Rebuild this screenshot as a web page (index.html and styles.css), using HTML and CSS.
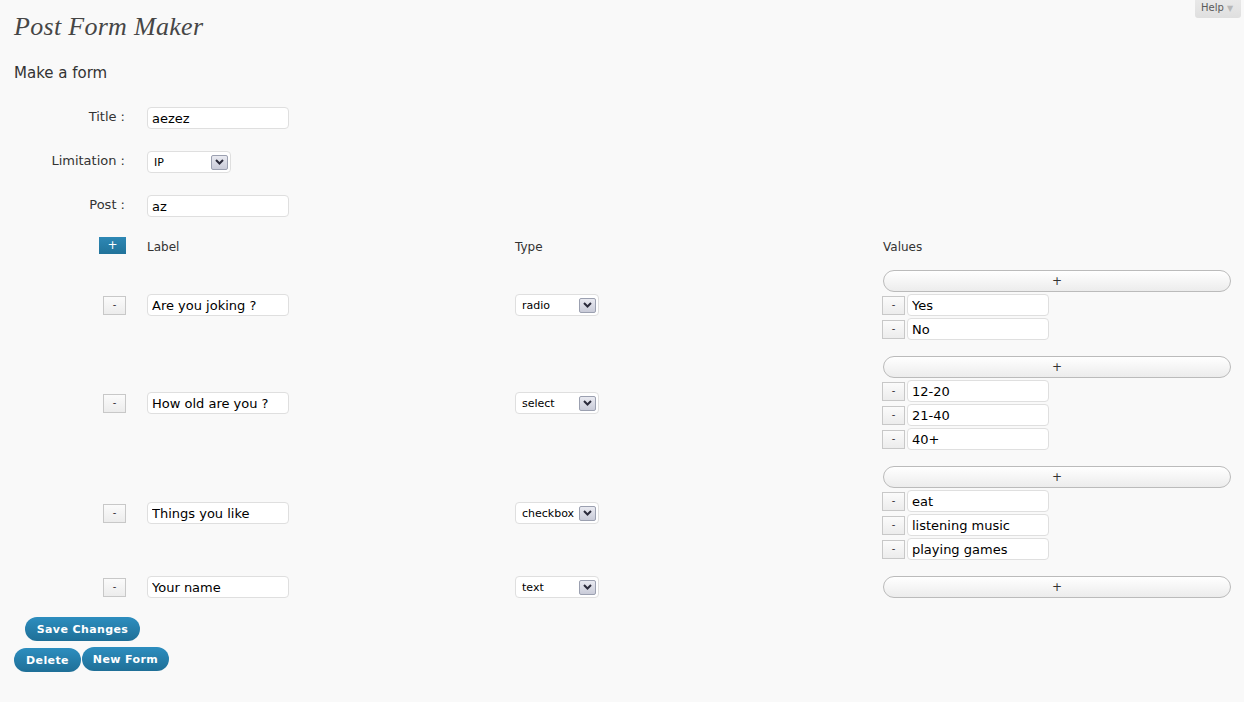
FILE: index.html
```html
<!DOCTYPE html>
<html>
<head>
<meta charset="utf-8">
<title>Post Form Maker</title>
<link rel="stylesheet" href="styles.css">
</head>
<body>
<div class="help-tab">Help <span class="help-arrow">▼</span></div>
<div class="wrap">
  <h2 class="page-title">Post Form Maker</h2>
  <h3 class="section-title">Make a form</h3>

  <div class="settings">
    <label class="field-label">Title :</label>
    <div class="field"><input class="text-input" type="text" value="aezez"></div>

    <label class="field-label">Limitation :</label>
    <div class="field">
      <div class="select small-select"><span class="select-value">IP</span><span class="select-arrow"><svg width="9" height="6" viewBox="0 0 9 6"><path d="M1 1 L4.5 4.5 L8 1" fill="none" stroke="#2b2b3b" stroke-width="2"/></svg></span></div>
    </div>

    <label class="field-label">Post :</label>
    <div class="field"><input class="text-input" type="text" value="az"></div>
  </div>

  <div class="fields">
    <div class="fields-row head">
      <div class="cell-btn"><button class="add-btn">+</button></div>
      <div class="col-head">Label</div>
      <div class="col-head">Type</div>
      <div class="col-head">Values</div>
    </div>

    <div class="fields-row">
      <div class="cell-btn"><button class="mini-btn">-</button></div>
      <div><input class="text-input" type="text" value="Are you joking ?"></div>
      <div><div class="select type-select"><span class="select-value">radio</span><span class="select-arrow"><svg width="9" height="6" viewBox="0 0 9 6"><path d="M1 1 L4.5 4.5 L8 1" fill="none" stroke="#2b2b3b" stroke-width="2"/></svg></span></div></div>
      <div class="values">
        <button class="pill-btn">+</button>
        <div class="value-row"><button class="mini-btn">-</button><input class="text-input value-input" type="text" value="Yes"></div>
        <div class="value-row"><button class="mini-btn">-</button><input class="text-input value-input" type="text" value="No"></div>
      </div>
    </div>

    <div class="fields-row">
      <div class="cell-btn"><button class="mini-btn">-</button></div>
      <div><input class="text-input" type="text" value="How old are you ?"></div>
      <div><div class="select type-select"><span class="select-value">select</span><span class="select-arrow"><svg width="9" height="6" viewBox="0 0 9 6"><path d="M1 1 L4.5 4.5 L8 1" fill="none" stroke="#2b2b3b" stroke-width="2"/></svg></span></div></div>
      <div class="values">
        <button class="pill-btn">+</button>
        <div class="value-row"><button class="mini-btn">-</button><input class="text-input value-input" type="text" value="12-20"></div>
        <div class="value-row"><button class="mini-btn">-</button><input class="text-input value-input" type="text" value="21-40"></div>
        <div class="value-row"><button class="mini-btn">-</button><input class="text-input value-input" type="text" value="40+"></div>
      </div>
    </div>

    <div class="fields-row">
      <div class="cell-btn"><button class="mini-btn">-</button></div>
      <div><input class="text-input" type="text" value="Things you like"></div>
      <div><div class="select type-select"><span class="select-value">checkbox</span><span class="select-arrow"><svg width="9" height="6" viewBox="0 0 9 6"><path d="M1 1 L4.5 4.5 L8 1" fill="none" stroke="#2b2b3b" stroke-width="2"/></svg></span></div></div>
      <div class="values">
        <button class="pill-btn">+</button>
        <div class="value-row"><button class="mini-btn">-</button><input class="text-input value-input" type="text" value="eat"></div>
        <div class="value-row"><button class="mini-btn">-</button><input class="text-input value-input" type="text" value="listening music"></div>
        <div class="value-row"><button class="mini-btn">-</button><input class="text-input value-input" type="text" value="playing games"></div>
      </div>
    </div>

    <div class="fields-row">
      <div class="cell-btn"><button class="mini-btn">-</button></div>
      <div><input class="text-input" type="text" value="Your name"></div>
      <div><div class="select type-select"><span class="select-value">text</span><span class="select-arrow"><svg width="9" height="6" viewBox="0 0 9 6"><path d="M1 1 L4.5 4.5 L8 1" fill="none" stroke="#2b2b3b" stroke-width="2"/></svg></span></div></div>
      <div class="values">
        <button class="pill-btn">+</button>
      </div>
    </div>
  </div>

  <div class="submit">
    <button class="primary-btn save-btn">Save Changes</button>
  </div>
  <div class="actions">
    <button class="primary-btn delete-btn">Delete</button><button class="primary-btn new-btn">New Form</button>
  </div>
</div>
</body>
</html>
```

FILE: styles.css
```css
html, body {
  margin: 0;
  padding: 0;
  background: #f9f9f9;
}

body {
  font-family: "DejaVu Sans", Verdana, sans-serif;
  color: #333;
  font-size: 13px;
  position: relative;
  min-height: 702px;
}

button, input {
  font-family: "DejaVu Sans", Verdana, sans-serif;
}

/* Contextual help tab, top right */
.help-tab {
  position: absolute;
  top: 0;
  right: 3px;
  width: 46px;
  height: 18px;
  box-sizing: border-box;
  background: linear-gradient(#e9e9e9, #dfdfdf);
  border-radius: 0 0 3px 3px;
  font-size: 10px;
  line-height: 16px;
  color: #5a5a5a;
  padding-left: 6px;
}

.help-arrow {
  color: #b8b8b8;
  font-size: 8px;
}

.wrap {
  padding: 0 13px 0 14px;
}

.page-title {
  margin: 0;
  padding-top: 12px;
  font-family: "Liberation Serif", Georgia, serif;
  font-style: italic;
  font-weight: normal;
  font-size: 26px;
  line-height: 30px;
  height: 30px;
  color: #464646;
  letter-spacing: 0.3px;
}

.section-title {
  margin: 21px 0 0 0;
  font-size: 15px;
  font-weight: normal;
  line-height: 20px;
  color: #333;
}

/* Top settings: label column + field column */
.settings {
  display: grid;
  grid-template-columns: 133px 1fr;
  grid-auto-rows: 22px;
  row-gap: 22px;
  margin-top: 24px;
  align-items: center;
}

.field-label {
  text-align: right;
  padding-right: 22px;
  font-size: 13px;
  color: #333;
  padding-top: 0;
  margin-top: -3px;
}

.field {
  display: flex;
  align-items: center;
}

.text-input {
  width: 142px;
  height: 22px;
  box-sizing: border-box;
  border: 1px solid #dfdfdf;
  border-radius: 4px;
  background: #fff;
  padding: 0 4px;
  font-size: 13px;
  color: #000;
  outline: none;
}

.select {
  box-sizing: border-box;
  height: 22px;
  border: 1px solid #dfdfdf;
  border-radius: 4px;
  background: #fff;
  display: flex;
  align-items: center;
  justify-content: space-between;
  padding: 0 2px 0 6px;
  font-size: 11px;
  color: #000;
}

.small-select {
  width: 84px;
}

.type-select {
  width: 84px;
}

.select-arrow {
  width: 17px;
  height: 15px;
  box-sizing: border-box;
  border: 1px solid #9ba0b0;
  border-radius: 2px;
  background: linear-gradient(#e9eaf1, #c9cbd8);
  display: flex;
  align-items: center;
  justify-content: center;
}

/* Field table */
.fields {
  margin-top: 20px;
  display: flex;
  flex-direction: column;
  row-gap: 16px;
}

.fields-row {
  display: grid;
  grid-template-columns: 133px 368px 368px 348px;
  align-items: center;
}

.fields-row.head {
  height: 17px;
}

.cell-btn {
  display: flex;
  justify-content: flex-end;
  padding-right: 21px;
}

.col-head {
  font-size: 12px;
  color: #333;
  padding-top: 3px;
}

.add-btn {
  width: 27px;
  height: 17px;
  border: 0;
  padding: 0;
  background: linear-gradient(#2e88b5, #21739a);
  color: #fff;
  font-size: 12px;
  line-height: 17px;
}

.mini-btn {
  width: 23px;
  height: 19px;
  box-sizing: border-box;
  border: 1px solid #c8c8c8;
  background: linear-gradient(#fbfbfb, #ececec);
  padding: 0;
  font-size: 10px;
  color: #333;
  line-height: 16px;
}

.values {
  display: flex;
  flex-direction: column;
  row-gap: 2px;
}

.pill-btn {
  width: 348px;
  height: 22px;
  box-sizing: border-box;
  border: 1px solid #bbb;
  border-radius: 11px;
  background: linear-gradient(#ffffff, #ececec);
  padding: 0;
  font-size: 12px;
  color: #333;
}

.value-row {
  display: flex;
  align-items: center;
  column-gap: 2px;
  height: 22px;
  margin-left: -1px;
}

.value-input {
  width: 142px;
  height: 22px;
}

/* Submit buttons */
.primary-btn {
  height: 24px;
  border: 0;
  border-radius: 12px;
  background: linear-gradient(#2d8ebf, #1f6f97);
  color: #fff;
  font-weight: bold;
  font-size: 11px;
  letter-spacing: 0.4px;
  padding: 0;
  white-space: nowrap;
}

.submit {
  margin-top: 19px;
  padding-left: 11px;
}

.save-btn {
  width: 115px;
}

.actions {
  margin-top: 6px;
  display: flex;
  align-items: flex-start;
}

.delete-btn {
  width: 67px;
  margin-top: 1px;
}

.new-btn {
  width: 87px;
  margin-left: 1px;
}
```
